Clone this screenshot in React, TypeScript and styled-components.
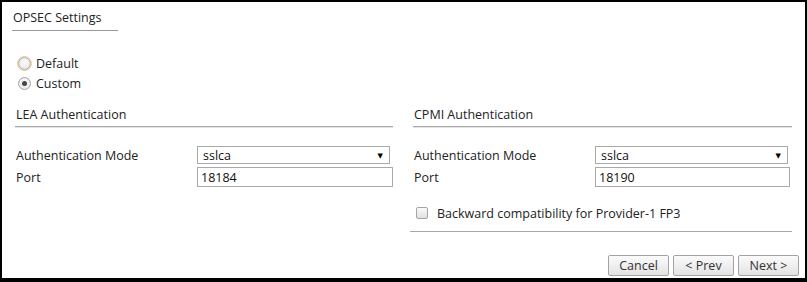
import React, { useState } from 'react';
import styled, { createGlobalStyle } from 'styled-components';

const GlobalStyle = createGlobalStyle`
  html, body {
    margin: 0;
    padding: 0;
    background: #ffffff;
  }
  * {
    box-sizing: border-box;
  }
`;

const Frame = styled.div`
  width: 807px;
  height: 282px;
  border: 2px solid #000;
  border-bottom-width: 4px;
  background: #fff;
  font-family: 'Open Sans', 'DejaVu Sans', sans-serif;
  font-size: 12.5px;
  color: #222;
  display: flex;
  flex-direction: column;
`;

const TabTitle = styled.div`
  align-self: flex-start;
  margin: 8px 0 0 10px;
  width: 106px;
  padding: 0 0 5px 1px;
  line-height: 15px;
  border-bottom: 1px solid #999;
`;

const RadioGroup = styled.div`
  display: flex;
  flex-direction: column;
  gap: 5px;
  margin: 25px 0 0 16px;
`;

const Choice = styled.label`
  display: flex;
  align-items: center;
  gap: 5px;
  height: 15px;
  cursor: pointer;
`;

const RadioDot = styled.span<{ $checked?: boolean; $focus?: boolean }>`
  width: 13px;
  height: 13px;
  border-radius: 50%;
  border: 1px solid #a6a6a6;
  background: radial-gradient(circle at 50% 40%, #fbfbfb 0%, #e2e2e2 100%);
  display: flex;
  align-items: center;
  justify-content: center;
  outline: ${(p) => (p.$focus ? '1px solid #f0c79a' : 'none')};
  outline-offset: 0;

  &::after {
    content: '';
    display: ${(p) => (p.$checked ? 'block' : 'none')};
    width: 5px;
    height: 5px;
    border-radius: 50%;
    background: #444;
  }
`;

const Columns = styled.div`
  display: grid;
  grid-template-columns: 378px 382px;
  column-gap: 17px;
  margin: 16px 0 0 13px;
`;

const Column = styled.div`
  display: flex;
  flex-direction: column;
`;

const Section = styled.div<{ $inset: number }>`
  margin-left: ${(p) => p.$inset}px;
`;

const SectionTitle = styled.div`
  padding: 0 0 0 1px;
  line-height: 15px;
  height: 20px;
  border-bottom: 1px solid #a9a9a9;
  box-shadow: 0 1px 0 #e4e4e4;
`;

const FieldGrid = styled.div`
  display: grid;
  grid-template-columns: 182px 1fr;
  row-gap: 3px;
  margin-top: 19px;
  align-items: center;
`;

const FieldLabel = styled.span`
  padding-left: 1px;
`;

const SelectBox = styled.div<{ $width: number }>`
  width: ${(p) => p.$width}px;
  height: 18px;
  border: 1px solid #a9a9a9;
  display: flex;
  align-items: center;
  justify-content: space-between;
  padding: 0 6px 0 5px;
  color: #111;
`;

const Caret = styled.span`
  font-size: 7px;
  color: #000;
`;

const TextBox = styled.div<{ $width: number }>`
  width: ${(p) => p.$width}px;
  height: 20px;
  border: 1px solid #a9a9a9;
  display: flex;
  align-items: center;
  padding: 0 3px;
  color: #111;
`;

const CheckRow = styled.label`
  display: flex;
  align-items: center;
  gap: 9px;
  margin: 19px 0 0 6px;
  height: 14px;
  cursor: pointer;
`;

const CheckBox = styled.span`
  width: 12px;
  height: 12px;
  border: 1px solid #a6a6a6;
  border-radius: 2px;
  background: linear-gradient(#fafafa, #e0e0e0);
`;

const Divider = styled.div`
  height: 1px;
  background: #a9a9a9;
  margin-top: 11px;
`;

const Footer = styled.div`
  display: flex;
  justify-content: flex-end;
  gap: 4px;
  margin: auto 6px 2px 0;
`;

const Button = styled.button`
  height: 21px;
  min-width: 61px;
  padding: 0 8px;
  border: 1px solid #a3a3a3;
  border-radius: 2px;
  background: linear-gradient(#fbfbfb, #e3e3e3);
  font-family: inherit;
  font-size: 12.5px;
  color: #333;
  cursor: pointer;
`;

function AuthSection({ title, port, inset, selectWidth, inputWidth }: {
  title: string;
  port: string;
  inset: number;
  selectWidth: number;
  inputWidth: number;
}) {
  return (
    <Section $inset={inset}>
      <SectionTitle>{title}</SectionTitle>
      <FieldGrid>
        <FieldLabel>Authentication Mode</FieldLabel>
        <SelectBox $width={selectWidth}>
          <span>sslca</span>
          <Caret>▼</Caret>
        </SelectBox>
        <FieldLabel>Port</FieldLabel>
        <TextBox $width={inputWidth}>{port}</TextBox>
      </FieldGrid>
    </Section>
  );
}

export default function App() {
  const [mode, setMode] = useState<'default' | 'custom'>('custom');
  const [backward, setBackward] = useState(false);

  return (
    <>
      <GlobalStyle />
      <Frame>
        <TabTitle>OPSEC Settings</TabTitle>

        <RadioGroup>
          <Choice onClick={() => setMode('default')}>
            <RadioDot $checked={mode === 'default'} $focus />
            Default
          </Choice>
          <Choice onClick={() => setMode('custom')}>
            <RadioDot $checked={mode === 'custom'} />
            Custom
          </Choice>
        </RadioGroup>

        <Columns>
          <Column>
            <AuthSection title="LEA Authentication" port="18184" inset={0} selectWidth={193} inputWidth={196} />
          </Column>
          <Column>
            <AuthSection title="CPMI Authentication" port="18190" inset={3} selectWidth={193} inputWidth={195} />
            <CheckRow onClick={() => setBackward(!backward)}>
              <CheckBox />
              Backward compatibility for Provider-1 FP3
            </CheckRow>
            <Divider />
          </Column>
        </Columns>

        <Footer>
          <Button>Cancel</Button>
          <Button>&lt; Prev</Button>
          <Button>Next &gt;</Button>
        </Footer>
      </Frame>
    </>
  );
}
